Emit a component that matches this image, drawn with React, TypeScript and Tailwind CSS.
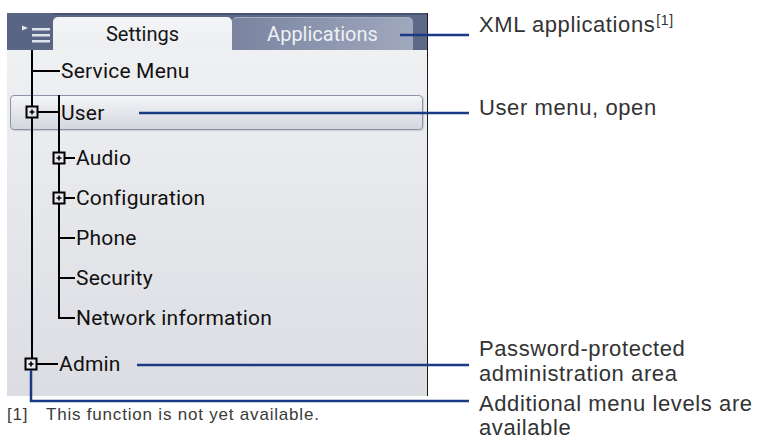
const screenFont = { fontFamily: 'Roboto, "DejaVu Sans", sans-serif' };
const labelFont = { fontFamily: '"Liberation Sans", Arial, sans-serif' };

const subItems = ['Audio', 'Configuration', 'Phone', 'Security', 'Network information'];

function MenuIcon() {
    return (
        <svg width="46" height="37" viewBox="0 0 46 37">
            <path d="M15 12.5 L21 15 L15 17.5 Z" fill="#e4e8f0" />
            <rect x="25" y="15" width="18" height="2.5" fill="#dfe3eb" />
            <rect x="25" y="21" width="18" height="2.5" fill="#dfe3eb" />
            <rect x="25" y="27" width="18" height="2.5" fill="#dfe3eb" />
        </svg>
    );
}

function PlusBox({ x, y }: { x: number; y: number }) {
    return (
        <g>
            <rect x={x - 5.5} y={y - 5.5} width="11" height="11" fill="#e9eaee" stroke="#000" strokeWidth="2" />
            <path d={`M${x - 2.5} ${y} H${x + 2.5} M${x} ${y - 2.5} V${y + 2.5}`} stroke="#000" strokeWidth="1.6" />
        </g>
    );
}

function App() {
    return (
        <div className="relative w-[761px] h-[440px] bg-white overflow-hidden flex">
            {/* phone screen */}
            <div className="w-[440px] pl-[7px] pt-[13px] flex flex-col">
                <div className="w-[421px] h-[383px] border-r border-[#1c1c1c] flex flex-col" style={screenFont}>
                    <div className="h-[37px] bg-[#5e6987] border-t-2 border-[#4a536f] flex">
                        <div className="w-[46px] h-full -mt-[2px] bg-[#5a6584]">
                            <MenuIcon />
                        </div>
                        <div className="flex items-end flex-1">
                            <div className="w-[179px] h-[33px] rounded-t-[5px] bg-gradient-to-b from-[#f4f5f7] to-[#eceef1] flex items-center justify-center text-[20px] text-[#151515]">
                                Settings
                            </div>
                            <div className="w-[181px] h-[33px] rounded-t-[5px] bg-gradient-to-r from-[#7a849f] to-[#a0a8be] border-t border-[#a7afc3] flex items-center justify-center text-[20px] text-[#eef1f6]">
                                Applications
                            </div>
                        </div>
                    </div>

                    <div className="flex-1 flex flex-col bg-gradient-to-b from-[#eff0f2] to-[#dcdde3] text-[21px] tracking-[0.2px] text-[#111]">
                        <div className="h-[42px] pt-[2px] flex items-center pl-[54px]">Service Menu</div>
                        <div className="mt-[3px] ml-[3px] w-[413px] h-[35px] pt-[2px] rounded-[4px] border border-[#8b93aa] bg-gradient-to-b from-[#f4f5f7] to-[#d4d7df] shadow-[1px_1px_1px_rgba(0,0,0,0.15)] flex items-center pl-[50px]">
                            User
                        </div>
                        <div className="mt-[8px] flex flex-col">
                            {subItems.map(item => (
                                <div key={item} className="h-[40px] pt-[2px] flex items-center pl-[69px]">
                                    {item}
                                </div>
                            ))}
                        </div>
                        <div className="mt-[6px] h-[40px] pt-[2px] flex items-center pl-[52px]">Admin</div>
                    </div>
                </div>
                <div className="mt-[9px] flex text-[17px] leading-[20px] text-[#3a3a3a] tracking-[0.8px]" style={labelFont}>
                    <span className="w-[39px]">[1]</span>
                    <span>This function is not yet available.</span>
                </div>
            </div>

            {/* callout labels */}
            <div className="flex flex-col pl-[39px] text-[22px] leading-[25px] tracking-[0.6px] text-[#333]" style={labelFont}>
                <div className="mt-[12px]">
                    XML applications<sup className="text-[14px] ml-[1px]">[1]</sup>
                </div>
                <div className="mt-[58px]">User menu, open</div>
                <div className="mt-[216px]">
                    Password-protected
                    <br />
                    administration area
                </div>
                <div className="mt-[6px] leading-[24px]">
                    Additional menu levels are
                    <br />
                    available
                </div>
            </div>

            {/* tree connectors and callout lines */}
            <svg className="absolute inset-0 pointer-events-none" width="761" height="440">
                <g stroke="#000" strokeWidth="2" fill="none">
                    <path d="M32 50 V358" />
                    <path d="M32 71 H60" />
                    <path d="M59 95 V318 H75" />
                    <path d="M38 112 H59" />
                    <path d="M65 158 H75" />
                    <path d="M65 198 H75" />
                    <path d="M59 238 H75" />
                    <path d="M59 278 H75" />
                    <path d="M37 364 H58" />
                </g>
                <PlusBox x={32} y={112} />
                <PlusBox x={59} y={158} />
                <PlusBox x={59} y={198} />
                <PlusBox x={31} y={364} />
                <g stroke="#1b3a84" strokeWidth="2.5" fill="none">
                    <path d="M400 35 H469" />
                    <path d="M139 113 H469" />
                    <path d="M137 365 H469" />
                    <path d="M31 370 V401 H469" />
                </g>
            </svg>
        </div>
    );
}

export default App;
